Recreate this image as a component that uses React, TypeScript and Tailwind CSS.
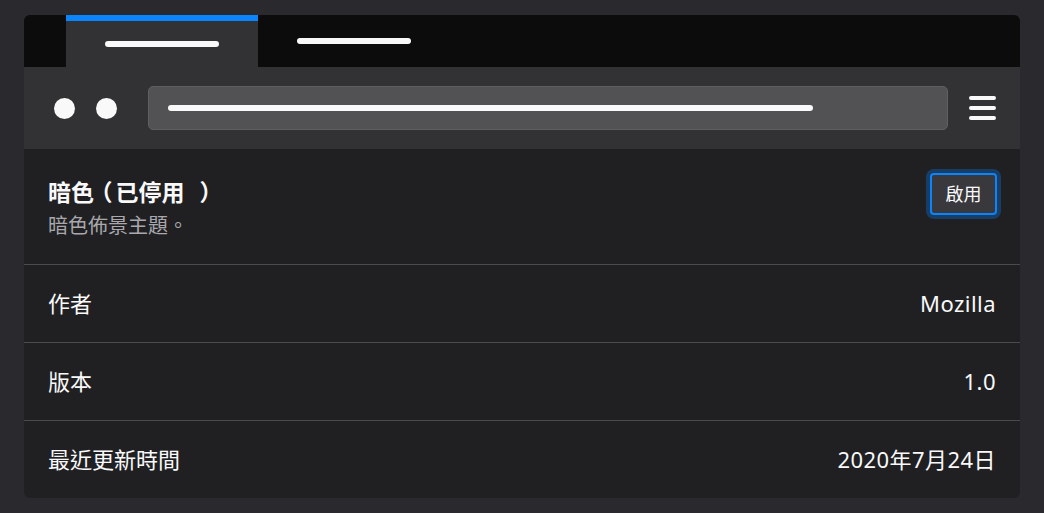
export default function App() {
  const rows = [
    { label: '作者', value: 'Mozilla' },
    { label: '版本', value: '1.0' },
    { label: '最近更新時間', value: '2020年7月24日' },
  ]

  return (
    <div
      className="w-full h-[513px] bg-[#2a2a2e] pt-[15px] px-[24px] text-[#f9f9fa]"
      style={{ fontFamily: '"Noto Sans", "Noto Sans CJK TC", sans-serif' }}
    >
      <div className="h-[483px] rounded-[6px] overflow-hidden bg-[#202023] flex flex-col">
        {/* tab strip */}
        <div className="h-[52px] bg-[#0c0c0d] flex pl-[42px] shrink-0">
          <div className="w-[192px] bg-[#323234] border-t-[6px] border-[#0a84ff] flex items-center justify-center">
            <div className="w-[114px] h-[6px] rounded-full bg-[#f9f9fa] -mt-[6px] translate-y-[3px]" />
          </div>
          <div className="w-[192px] flex items-center justify-center">
            <div className="w-[114px] h-[6px] rounded-full bg-[#f9f9fa]" />
          </div>
        </div>

        {/* toolbar */}
        <div className="h-[82px] bg-[#323234] flex items-center pl-[30px] pr-[24px] shrink-0">
          <div className="w-[21px] h-[21px] rounded-full bg-[#f9f9fa]" />
          <div className="w-[21px] h-[21px] rounded-full bg-[#f9f9fa] ml-[21px]" />
          <div className="ml-[31px] w-[800px] h-[44px] rounded-[5px] bg-[#525254] border border-[#5f5f62] flex items-center pl-[19px]">
            <div className="w-[645px] h-[6px] rounded-full bg-[#f9f9fa]" />
          </div>
          <div className="ml-[21px] w-[27px] flex flex-col gap-[6px]">
            <div className="h-[4px] rounded-full bg-[#f9f9fa]" />
            <div className="h-[4px] rounded-full bg-[#f9f9fa]" />
            <div className="h-[4px] rounded-full bg-[#f9f9fa]" />
          </div>
        </div>

        {/* theme header */}
        <div className="h-[115px] flex justify-between pl-[24px] pr-[23px] shrink-0">
          <div className="pt-[28px]">
            <div className="text-[23px] leading-[30px] font-bold whitespace-nowrap">
              暗色<span className="inline-block ml-[7px] mr-[3px] [font-feature-settings:'halt']">（</span>已停用<span className="inline-block ml-[15px] [font-feature-settings:'halt']">）</span>
            </div>
            <div className="mt-[5px] text-[20px] leading-[28px] text-[#a8a8ad]">暗色佈景主題。</div>
          </div>
          <button className="mt-[24px] w-[67px] h-[42px] rounded-[4px] border-2 border-[#0a84ff] bg-[#38383d] text-[18px] text-[#f9f9fa] shadow-[0_0_0_4px_rgba(10,132,255,0.3)] flex items-center justify-center">
            啟用
          </button>
        </div>

        {/* details */}
        {rows.map((r) => (
          <div
            key={r.label}
            className="h-[78px] border-t border-[#4a4a4f] flex items-center justify-between pl-[24px] pr-[24px] text-[22px] shrink-0"
          >
            <span>{r.label}</span>
            <span className="tracking-[0.45px]">{r.value}</span>
          </div>
        ))}
      </div>
    </div>
  )
}
